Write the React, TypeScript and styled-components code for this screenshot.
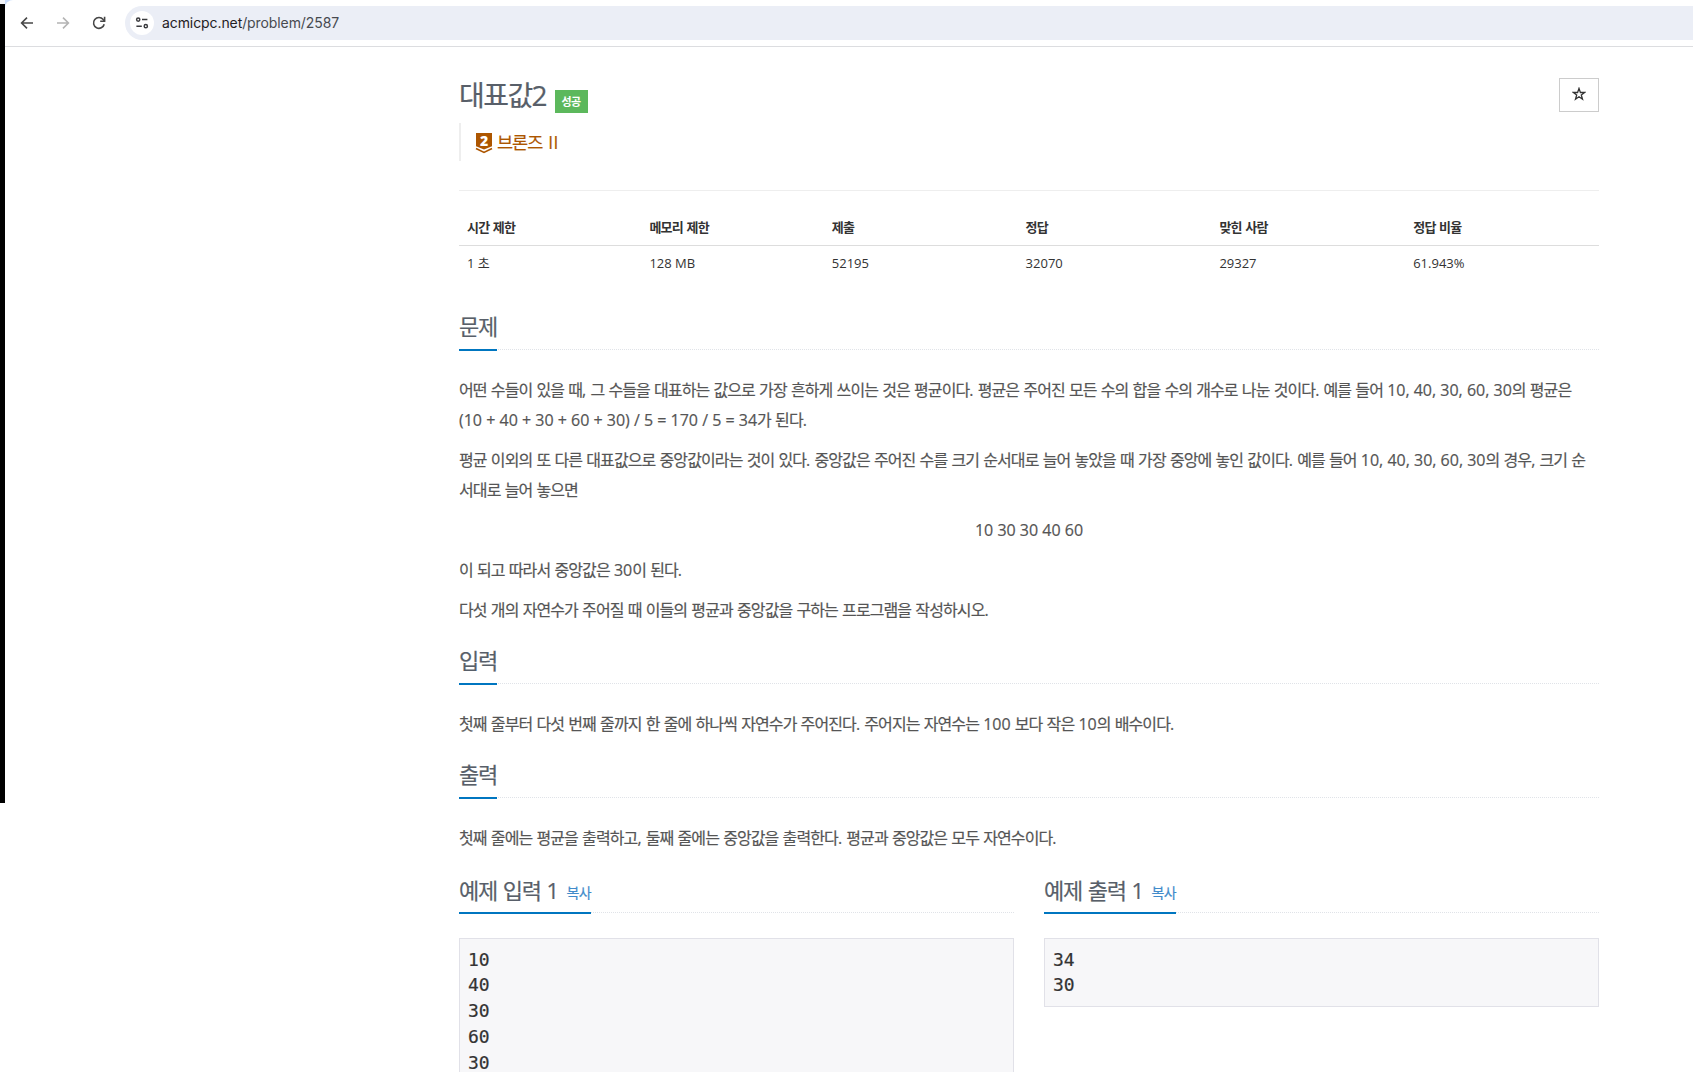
import React from "react";
import styled, { createGlobalStyle } from "styled-components";

const GlobalStyle = createGlobalStyle`
  *, *::before, *::after { box-sizing: border-box; }
  html, body { margin: 0; padding: 0; background: #fff; overflow: hidden; }
  body {
    font-family: "Open Sans", "Noto Sans CJK KR", sans-serif;
    font-size: 13px;
    color: #333;
  }
`;

const Window = styled.div`
  display: flex;
  align-items: flex-start;
  height: 1072px;
  overflow: hidden;
`;

const DesktopEdge = styled.div`
  flex: none;
  width: 5px;
  height: 803px;
  border-top: 4px solid #f4f6fb;
  background: #000;
`;

const Browser = styled.div`
  flex: 1;
  min-width: 0;
`;

const ToolbarFrame = styled.div`
  background: #c9dcfb;
`;

const Toolbar = styled.div`
  display: flex;
  align-items: center;
  height: 47px;
  padding-left: 12px;
  background: #fff;
  border-bottom: 1px solid #dcdde0;
  border-top-left-radius: 8px;
`;

const NavButton = styled.span<{ $muted?: boolean }>`
  display: flex;
  align-items: center;
  justify-content: center;
  width: 20px;
  height: 20px;
  margin-right: 16px;
  color: ${(p) => (p.$muted ? "#b4b4b4" : "#474747")};
`;

const AddressBar = styled.div`
  display: flex;
  align-items: center;
  flex: 1;
  height: 34px;
  padding-left: 5px;
  background: #ebeef6;
  border-radius: 17px 0 0 17px;
`;

const SiteInfo = styled.span`
  display: flex;
  align-items: center;
  justify-content: center;
  width: 24px;
  height: 24px;
  margin-right: 8px;
  border-radius: 50%;
  background: #fff;
  color: #3a3b3e;
`;

const Url = styled.span`
  font-family: Inter, sans-serif;
  font-size: 14px;
  line-height: 20px;
  letter-spacing: -0.09px;
  color: #474a50;
`;

const Host = styled.span`
  color: #1f2023;
`;

const Content = styled.main`
  width: 1140px;
  margin-left: 454px;
  padding-top: 31px;
  -webkit-text-stroke: 0.2px currentColor;
`;

const TitleRow = styled.header`
  display: flex;
  justify-content: space-between;
  align-items: flex-start;
  height: 45px;
`;

const TitleGroup = styled.div`
  display: flex;
  align-items: flex-start;
`;

const Title = styled.h1`
  margin: 0;
  font-size: 28px;
  font-weight: 400;
  line-height: 35px;
  color: #585f69;
`;

const Badge = styled.span`
  height: 23px;
  margin: 12px 0 0 7px;
  padding: 0 7px;
  background: #5cb85c;
  color: #fff;
  font-size: 11px;
  font-weight: 700;
  line-height: 23px;
  -webkit-text-stroke: 0;
`;

const StarButton = styled.button`
  display: flex;
  align-items: center;
  justify-content: center;
  width: 40px;
  height: 34px;
  padding: 0 1px 3px 0;
  border: 1px solid #ccc;
  background: #fff;
  color: #333;
`;

const Tier = styled.blockquote`
  display: flex;
  align-items: center;
  gap: 5px;
  height: 38px;
  margin: 0 0 29px;
  padding-left: 15px;
  border-left: 2px solid #eee;
  font-size: 17.5px;
  color: #ad5600;
`;

const TierText = styled.span`
  line-height: 24px;
  word-spacing: 1.2px;
  letter-spacing: 0.2px;
`;

const InfoTable = styled.table`
  width: 100%;
  border-collapse: collapse;
  border-top: 1px solid #eee;
  table-layout: fixed;
  font-size: 13px;
  line-height: 18px;
`;

const HeadCell = styled.th<{ $width: string }>`
  width: ${(p) => p.$width};
  height: 55px;
  padding: 17px 8px 0;
  border-bottom: 1px solid #ddd;
  text-align: left;
  font-weight: 700;
  -webkit-text-stroke: 0;
`;

const Cell = styled.td`
  height: 36px;
  padding: 0 8px 2px;
  -webkit-text-stroke: 0;
`;

const Section = styled.section<{ $gap: number }>`
  padding-top: ${(p) => p.$gap}px;
`;

const Headline = styled.div`
  display: flex;
  border-bottom: 1px dotted #e0e3e8;
`;

const HeadlineText = styled.h2<{ $lineHeight: number }>`
  height: 44px;
  margin: 0 0 -2px;
  border-bottom: 2px solid #0076c0;
  font-size: 22px;
  font-weight: 400;
  line-height: ${(p) => p.$lineHeight}px;
  color: #585f69;
`;

const CopyLink = styled.a`
  position: relative;
  top: -1px;
  margin-left: 7.5px;
  font-size: 14px;
  color: #428bca;
`;

const Body = styled.div`
  padding-top: 25px;
`;

const Paragraph = styled.p<{ $center?: boolean }>`
  margin: 0 0 10px;
  font-size: 16px;
  line-height: 30px;
  color: #555;
  white-space: nowrap;
  text-align: ${(p) => (p.$center ? "center" : "left")};

  &:last-child {
    margin-bottom: 0;
  }
`;

const Samples = styled.div`
  display: grid;
  grid-template-columns: 1fr 1fr;
  gap: 30px;
  align-items: start;
`;

const SampleData = styled.pre`
  margin: 25px 0 0;
  padding: 8px;
  border: 1px solid #e1e1e8;
  background: #f7f7f9;
  color: #333;
  font-family: "DejaVu Sans Mono", monospace;
  font-size: 18px;
  line-height: 25.8px;
`;

const Hangul = styled.span`
  letter-spacing: -0.056em;
`;

/* Tightens the tracking of Hangul runs while leaving Latin text and digits alone. */
function Ko({ children }: { children: string }) {
  return (
    <>
      {children.split(/([가-힣]+)/).map((run, i) =>
        i % 2 ? <Hangul key={i}>{run}</Hangul> : run
      )}
    </>
  );
}

const ArrowIcon = ({ flip }: { flip?: boolean }) => (
  <svg width="14" height="14" viewBox="0 0 14 14" fill="none" stroke="currentColor" strokeWidth="1.6">
    <path d={flip ? "M1 7H12.2M7 1.6L12.4 7L7 12.4" : "M13 7H1.8M7 1.6L1.6 7L7 12.4"} />
  </svg>
);

const ReloadIcon = () => (
  <svg width="14" height="14" viewBox="0 0 14 14" fill="none" stroke="currentColor" strokeWidth="1.6">
    <path d="M12.2 8.2A5.4 5.4 0 1 1 11.2 3.6L12.6 5.2" />
    <path d="M12.6 0.8V5.3H8.2" />
  </svg>
);

const TuneIcon = () => (
  <svg width="14" height="14" viewBox="0 0 14 14" fill="none" stroke="currentColor" strokeWidth="1.5">
    <circle cx="3.2" cy="3.6" r="1.6" />
    <path d="M7 3.6H12.4M1.4 10.2H6.8" />
    <circle cx="10.8" cy="10.2" r="1.6" />
  </svg>
);

const StarIcon = () => (
  <svg width="14" height="14" viewBox="0 0 14 14" fill="none" stroke="currentColor" strokeWidth="1.3">
    <path d="M7 1.4L8.4 5.5H12.7L9.3 8L10.5 12.2L7 9.7L3.5 12.2L4.7 8L1.3 5.5H5.6Z" />
  </svg>
);

const TierMark = styled.svg`
  flex: none;
  margin-top: 3px;
  overflow: visible;
  font-family: "Open Sans", sans-serif;
  font-size: 14px;
  font-weight: 800;
  -webkit-text-stroke: 0;
`;

const TierIcon = () => (
  <TierMark width="16" height="21" viewBox="0 0 16 21">
    <path d="M0 0H16V13.2L8 16.6L0 13.2Z" fill="#ad5600" />
    <path d="M0 15.4L8 19.4L16 15.4" fill="none" stroke="#ad5600" strokeWidth="1.7" />
    <text x="8" y="13.2" textAnchor="middle" fill="#fff">2</text>
  </TierMark>
);

const info = [
  { label: "시간 제한", value: "1 초", width: "16%" },
  { label: "메모리 제한", value: "128 MB", width: "16%" },
  { label: "제출", value: "52195", width: "17%" },
  { label: "정답", value: "32070", width: "17%" },
  { label: "맞힌 사람", value: "29327", width: "17%" },
  { label: "정답 비율", value: "61.943%", width: "17%" },
];

const samples = [
  { title: "예제 입력 1", data: "10\n40\n30\n60\n30" },
  { title: "예제 출력 1", data: "34\n30" },
];

function Heading({ children, copy }: { children: string; copy?: boolean }) {
  return (
    <Headline>
      <HeadlineText $lineHeight={copy ? 40 : 39}>
        <Ko>{children}</Ko>
        {copy && (
          <CopyLink>
            <Ko>복사</Ko>
          </CopyLink>
        )}
      </HeadlineText>
    </Headline>
  );
}

export default function App() {
  return (
    <Window>
      <GlobalStyle />
      <DesktopEdge />
      <Browser>
        <ToolbarFrame>
          <Toolbar>
            <NavButton><ArrowIcon /></NavButton>
            <NavButton $muted><ArrowIcon flip /></NavButton>
            <NavButton><ReloadIcon /></NavButton>
            <AddressBar>
              <SiteInfo><TuneIcon /></SiteInfo>
              <Url><Host>acmicpc.net</Host>/problem/2587</Url>
            </AddressBar>
          </Toolbar>
        </ToolbarFrame>
        <Content>
          <TitleRow>
            <TitleGroup>
              <Title><Ko>대표값2</Ko></Title>
              <Badge><Ko>성공</Ko></Badge>
            </TitleGroup>
            <StarButton><StarIcon /></StarButton>
          </TitleRow>
          <Tier>
            <TierIcon />
            <TierText><Ko>브론즈 II</Ko></TierText>
          </Tier>
          <InfoTable>
            <thead>
              <tr>
                {info.map((c) => (
                  <HeadCell key={c.label} $width={c.width}><Ko>{c.label}</Ko></HeadCell>
                ))}
              </tr>
            </thead>
            <tbody>
              <tr>
                {info.map((c) => (
                  <Cell key={c.label}><Ko>{c.value}</Ko></Cell>
                ))}
              </tr>
            </tbody>
          </InfoTable>
          <Section $gap={25}>
            <Heading>문제</Heading>
            <Body>
              <Paragraph>
                <Ko>어떤 수들이 있을 때, 그 수들을 대표하는 값으로 가장 흔하게 쓰이는 것은 평균이다. 평균은 주어진 모든 수의 합을 수의 개수로 나눈 것이다. 예를 들어 10, 40, 30, 60, 30의 평균은</Ko>
                <br />
                <Ko>(10 + 40 + 30 + 60 + 30) / 5 = 170 / 5 = 34가 된다.</Ko>
              </Paragraph>
              <Paragraph>
                <Ko>평균 이외의 또 다른 대표값으로 중앙값이라는 것이 있다. 중앙값은 주어진 수를 크기 순서대로 늘어 놓았을 때 가장 중앙에 놓인 값이다. 예를 들어 10, 40, 30, 60, 30의 경우, 크기 순</Ko>
                <br />
                <Ko>서대로 늘어 놓으면</Ko>
              </Paragraph>
              <Paragraph $center>10 30 30 40 60</Paragraph>
              <Paragraph><Ko>이 되고 따라서 중앙값은 30이 된다.</Ko></Paragraph>
              <Paragraph><Ko>다섯 개의 자연수가 주어질 때 이들의 평균과 중앙값을 구하는 프로그램을 작성하시오.</Ko></Paragraph>
            </Body>
          </Section>
          <Section $gap={16}>
            <Heading>입력</Heading>
            <Body>
              <Paragraph><Ko>첫째 줄부터 다섯 번째 줄까지 한 줄에 하나씩 자연수가 주어진다. 주어지는 자연수는 100 보다 작은 10의 배수이다.</Ko></Paragraph>
            </Body>
          </Section>
          <Section $gap={16}>
            <Heading>출력</Heading>
            <Body>
              <Paragraph><Ko>첫째 줄에는 평균을 출력하고, 둘째 줄에는 중앙값을 출력한다. 평균과 중앙값은 모두 자연수이다.</Ko></Paragraph>
            </Body>
          </Section>
          <Samples>
            {samples.map((s) => (
              <Section key={s.title} $gap={17}>
                <Heading copy>{s.title}</Heading>
                <SampleData>{s.data}</SampleData>
              </Section>
            ))}
          </Samples>
        </Content>
      </Browser>
    </Window>
  );
}
